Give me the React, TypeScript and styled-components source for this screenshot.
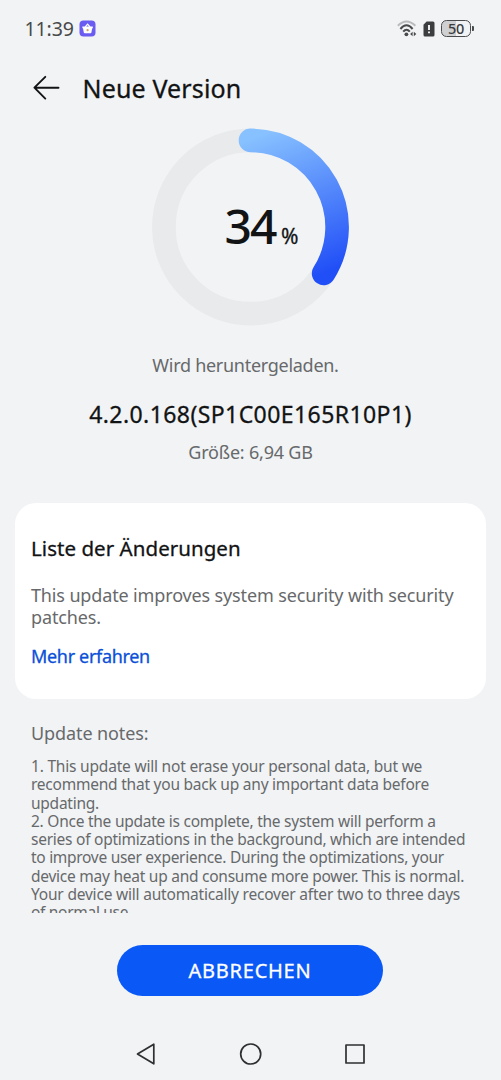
import React from "react";
import styled, { createGlobalStyle, css } from "styled-components";

const GlobalStyle = createGlobalStyle`
  * { box-sizing: border-box; }
  body {
    margin: 0;
    background: #f1f3f5;
    font-family: "Noto Sans", "Open Sans", sans-serif;
    color: #121314;
  }
  h1, h2, p { margin: 0; font-weight: 400; }
`;

const semiMedium = css`
  font-weight: 400;
  -webkit-text-stroke: 0.3px currentColor;
`;

const Screen = styled.div`
  width: 501px;
  height: 1080px;
  display: flex;
  flex-direction: column;
  overflow: hidden;
  background: #f1f3f5;
`;

const StatusBar = styled.header`
  height: 57px;
  display: flex;
  align-items: center;
  padding: 0 27px 0 24px;
  svg { display: block; }
`;

const Clock = styled.span`
  font-size: 19.5px;
  line-height: 24px;
  width: 55px;
  padding-left: 0.5px;
  letter-spacing: -0.1px;
  color: #48494b;
`;

const StatusIcons = styled.div`
  margin-left: auto;
  display: flex;
  align-items: center;
  gap: 6px;
`;

const Battery = styled.div`
  display: flex;
  align-items: center;
  gap: 1px;
  &::after {
    content: "";
    width: 2px;
    height: 5px;
    border-radius: 0 1px 1px 0;
    background: #4a4b4d;
  }
`;

const BatteryBody = styled.div`
  width: 30px;
  height: 17px;
  border: 1.5px solid #4a4b4d;
  border-radius: 5.5px;
  display: flex;
  align-items: center;
  justify-content: center;
  background: linear-gradient(90deg, #cfd0d2 50%, transparent 50%);
  font-size: 14.5px;
  font-weight: 500;
  line-height: 12px;
  padding-bottom: 1px;
  letter-spacing: -0.3px;
  color: #3c3d3f;
`;

const TitleBar = styled.div`
  height: 62px;
  display: flex;
  align-items: center;
  padding-left: 32px;
  gap: 20.5px;
`;

const BackButton = styled.button`
  border: 0;
  padding: 0;
  width: 30px;
  height: 30px;
  background: none;
  svg { display: block; }
`;

const Title = styled.h1`
  ${semiMedium}
  font-size: 25px;
  line-height: 34px;
  letter-spacing: 0.15px;
`;

const Progress = styled.section`
  display: grid;
  grid-template-rows: 197px;
  justify-content: center;
  padding-top: 9px;
  > * { grid-area: 1 / 1; }
  svg { display: block; }
`;

const Percent = styled.div`
  display: flex;
  align-items: baseline;
  justify-content: center;
  padding-left: 22px;
  gap: 5.5px;
  line-height: 196px;
`;

const PercentValue = styled.span`
  font-size: 48px;
  font-weight: 500;
  letter-spacing: -1.9px;
`;

const PercentSign = styled.span`
  ${semiMedium}
  font-size: 21px;
  line-height: 28px;
`;

const Summary = styled.section`
  text-align: center;
  padding-top: 26px;
`;

const State = styled.p`
  font-size: 18px;
  line-height: 28px;
  letter-spacing: -0.28px;
  color: #67696b;
  padding-right: 10px;
`;

const VersionName = styled.h2`
  ${semiMedium}
  font-size: 23px;
  line-height: 34px;
  letter-spacing: 0.42px;
  margin-top: 18px;
`;

const Size = styled.p`
  font-size: 18px;
  line-height: 28px;
  letter-spacing: -0.2px;
  margin-top: 7px;
  color: #67696b;
`;

const Card = styled.section`
  margin: 37px 15px 0;
  height: 196px;
  border-radius: 21px;
  background: #fff;
  padding: 31px 16px 0;
`;

const CardTitle = styled.h2`
  ${semiMedium}
  font-size: 20.5px;
  line-height: 28px;
  letter-spacing: 0.05px;
`;

const CardText = styled.p`
  margin-top: 23px;
  font-size: 18px;
  line-height: 21.6px;
  letter-spacing: -0.14px;
  color: #67696b;
`;

const MoreLink = styled.a`
  ${semiMedium}
  display: block;
  margin-top: 16px;
  font-size: 18px;
  line-height: 24px;
  letter-spacing: -0.32px;
  color: #0a50d8;
`;

const Notes = styled.section`
  height: 214px;
  padding: 21px 16px 0 31px;
  overflow: hidden;
  color: #67696b;
`;

const NotesTitle = styled.p`
  font-size: 18px;
  line-height: 26px;
  letter-spacing: -0.1px;
`;

const NotesText = styled.div`
  margin-top: 11px;
  font-size: 15.5px;
  line-height: 18.25px;
  white-space: nowrap;
`;

const Line = styled.span<{ $track?: number }>`
  display: block;
  white-space: nowrap;
  letter-spacing: ${(p) => p.$track ?? -0.25}px;
`;

const CancelButton = styled.button`
  margin: 32px 0 0 117px;
  width: 266px;
  height: 51px;
  flex: none;
  border: 0;
  border-radius: 26px;
  background: #0a59f7;
  color: #fff;
  font: 400 20px/28px "Noto Sans", sans-serif;
  -webkit-text-stroke: 0.3px currentColor;
  letter-spacing: 0.75px;
`;

const NavBar = styled.nav`
  margin-top: 43px;
  width: 501px;
  display: flex;
  justify-content: center;
  gap: 80px;
  svg { display: block; }
`;

const noteLines: [string, number?][] = [
  ["1. This update will not erase your personal data, but we", -0.2],
  ["recommend that you back up any important data before", -0.23],
  ["updating."],
  ["2. Once the update is complete, the system will perform a"],
  ["series of optimizations in the background, which are intended"],
  ["to improve user experience. During the optimizations, your", -0.29],
  ["device may heat up and consume more power. This is normal."],
  ["Your device will automatically recover after two to three days", -0.2],
  ["of normal use.", -0.3],
];

function ProgressRing({ value }: { value: number }) {
  const r = 86.6;
  const a = (value / 100) * Math.PI * 2;
  const x = 98.5 + r * Math.sin(a);
  const y = 99 - r * Math.cos(a);
  return (
    <svg width="197" height="198" viewBox="0 0 197 198" fill="none">
      <defs>
        <linearGradient id="arc" gradientUnits="userSpaceOnUse" x1="95" y1="12" x2="150" y2="155">
          <stop offset="0" stopColor="#87c1ff" />
          <stop offset="1" stopColor="#204ef7" />
        </linearGradient>
      </defs>
      <circle cx="98.5" cy="99" r={r} stroke="#e8eaec" strokeWidth="23.6" />
      <path d={`M98.5 ${99 - r}A${r} ${r} 0 0 1 ${x} ${y}`} stroke="url(#arc)" strokeWidth="23.6" strokeLinecap="round" />
    </svg>
  );
}

export default function App() {
  return (
    <Screen>
      <GlobalStyle />
      <StatusBar>
        <Clock>11:39</Clock>
        <svg width="17" height="17" viewBox="0 0 17 17">
          <rect x="0.5" y="0.5" width="16" height="16" rx="4" fill="#6a5cf0" />
          <path d="M3.4 6.6h10.4v1.6h-.6l-.8 4.2q-.1.8-.9.8H5.7q-.8 0-.9-.8L4 8.2h-.6z" fill="#fff" />
          <path d="M6.2 7 8.6 4.2 11 7" stroke="#fff" strokeWidth="1.2" fill="none" />
          <circle cx="8.6" cy="10.2" r="1.1" fill="#c9a35c" />
        </svg>
        <StatusIcons>
          <svg width="20" height="17" viewBox="0 0 20 17" fill="none">
            <path d="M.8 5.8Q9.5-2.8 18.4 5.8" stroke="#b9bbbd" strokeWidth="1.9" />
            <path d="M3.4 9Q9.5 1.6 15.6 9M6.2 11.7Q9.5 7.6 12.8 11.7" stroke="#4a4b4d" strokeWidth="2" />
            <circle cx="9.4" cy="14.3" r="1.9" fill="#4a4b4d" />
            <path d="m15.6 11.8-2.5 2.2 2.5 2.200zM16.800 11.800l2.500 2.200-2.500 2.200z" fill="#4a4b4d" />
          </svg>
          <svg width="12" height="16" viewBox="0 0 12 16">
            <path d="M3.6.5H10q1.500 0 1.500 1.500v12q0 1.500-1.500 1.500H2Q.5 15.500.5 14V3.800z" fill="#3c3d3f" />
            <path d="M5.100 4h1.800v5H5.100zM5.100 10.500h1.800v1.800H5.100z" fill="#fff" />
          </svg>
          <Battery><BatteryBody>50</BatteryBody></Battery>
        </StatusIcons>
      </StatusBar>
      <TitleBar>
        <BackButton aria-label="Zurück">
          <svg width="30" height="30" viewBox="0 0 30 30" fill="none" stroke="#121314" strokeWidth="1.9" strokeLinecap="round" strokeLinejoin="round">
            <path d="M26.5 14.7H2.6M13.3 3.8 2.4 14.7l10.9 10.9" />
          </svg>
        </BackButton>
        <Title>Neue Version</Title>
      </TitleBar>
      <Progress>
        <ProgressRing value={34} />
        <Percent>
          <PercentValue>34</PercentValue>
          <PercentSign>%</PercentSign>
        </Percent>
      </Progress>
      <Summary>
        <State>Wird heruntergeladen.</State>
        <VersionName>4.2.0.168(SP1C00E165R10P1)</VersionName>
        <Size>Größe: 6,94 GB</Size>
      </Summary>
      <Card>
        <CardTitle>Liste der Änderungen</CardTitle>
        <CardText>This update improves system security with security patches.</CardText>
        <MoreLink>Mehr erfahren</MoreLink>
      </Card>
      <Notes>
        <NotesTitle>Update notes:</NotesTitle>
        <NotesText>
          {noteLines.map(([text, track]) => (
            <Line key={text} $track={track}>{text}</Line>
          ))}
        </NotesText>
      </Notes>
      <CancelButton>ABBRECHEN</CancelButton>
      <NavBar>
        <svg width="24" height="30" viewBox="0 0 24 30" fill="none" stroke="#2e2f31" strokeWidth="1.7" strokeLinejoin="round">
          <path d="M2.500 15 18.800 5.200v19.600z" />
        </svg>
        <svg width="24" height="30" viewBox="0 0 24 30" fill="none" stroke="#2e2f31" strokeWidth="1.7">
          <circle cx="11.700" cy="15" r="10" />
        </svg>
        <svg width="24" height="30" viewBox="0 0 24 30" fill="none" stroke="#2e2f31" strokeWidth="1.7" strokeLinejoin="round">
          <rect x="3" y="6" width="18" height="18" />
        </svg>
      </NavBar>
    </Screen>
  );
}
